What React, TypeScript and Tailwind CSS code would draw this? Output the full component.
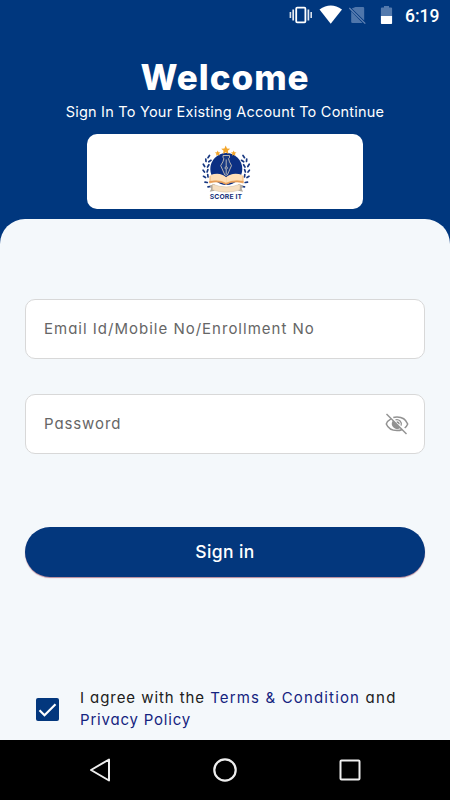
import React from "react";

function StatusBar() {
  return (
    <header className="flex h-8 items-start justify-end pr-[10px]">
      <svg width="117" height="30" viewBox="288 0 117 30" className="shrink-0">
        <g fill="none" stroke="#fff">
          <rect x="296.2" y="7.7" width="9.2" height="14.6" rx="1" strokeWidth="1.8" />
          <path d="M293.2 9.5v11M308.4 9.5v11" strokeWidth="1.7" opacity=".9" />
          <path d="M290.4 12v6M311.2 12v6" strokeWidth="1.6" opacity=".85" />
        </g>
        <path d="M319.5 9.4Q330.7 1.8 342 9.4L330.7 23.8Z" fill="#fff" />
        <g fill="#4f76ab">
          <path d="M355.5 7H363q1.2 0 1.2 1.2v12.2L351.8 8.6Z" />
          <path d="M351.2 11.2L362.5 23h-10q-1.3 0-1.3-1.3Z" />
        </g>
        <path d="M349.3 8L365.3 23.6" stroke="#6485b5" strokeWidth="1.3" />
        <path d="M384 6h5v1.5h2.1q1 0 1 1V16h-11.2V8.500q0-1 1-1H384Z" fill="#547aad" />
        <path d="M380.900 16h11.200v7.200q0 .8-.8.8h-9.600q-.8 0-.8-.8Z" fill="#fff" />
      </svg>
      <time className="mt-[5px] w-[35px] whitespace-nowrap font-[Roboto,sans-serif] text-[17.500px] leading-[22px] font-medium text-white">
        6:19
      </time>
    </header>
  );
}

function Logo() {
  return (
    <svg width="56" height="60" viewBox="197 141.5 56 60" role="img" aria-label="Score It">
      <circle cx="226.300" cy="168.500" r="16" fill="#0b2f83" />
      <g fill="#f3a62c">
        <path d="M225.700 145l1.300 2.900 3.200.3-2.400 2.100.7 3.100-2.800-1.600-2.800 1.600.7-3.100-2.400-2.100 3.200-.3Z" />
        <path d="M217.700 150l.8 1.800 2 .2-1.500 1.300.4 2-1.700-1-1.700 1 .4-2-1.500-1.300 2-.2Z" />
        <path d="M233.700 150l.8 1.800 2 .2-1.500 1.300.4 2-1.700-1-1.700 1 .4-2-1.500-1.300 2-.2Z" />
      </g>
      <g stroke="#183881" strokeWidth="1.700" strokeLinecap="round" fill="none">
        <path d="M208 157.200l1.500-2.200M206 161l-.2-2.500M208.800 161.300l2.200-1.500M204.700 166l-1.400-2.300M207.500 166.500l1.400-2.300M204.500 171.500l-1.400-1.800M207.100 171.500l.8-2.400M205.500 177l-2-1.200M208 176.500l-.3-2.500M207.300 182l-2.300-.4M210.300 186l-2.300.3" />
        <path d="M244.500 157.200l-1.500-2.200M246.500 161l.2-2.500M243.700 161.300l-2.200-1.500M247.800 166l1.400-2.300M245 166.500l-1.400-2.300M248 171.500l1.400-1.800M245.400 171.500l-.8-2.400M247 177l2-1.200M244.500 176.500l.3-2.500M245.200 182l2.300-.4M242.200 186l2.300.3" />
      </g>
      <path d="M223 155h6.500v2.300l-1 .8q.5 3 3 7l-4.200 9.500h-2.400l-4.200-9.500q2.700-4 3.200-7l-.9-.8Z" fill="#183a83" stroke="#c7c1b7" strokeWidth=".9" />
      <path d="M226.200 159v7.500M226.200 169v4.500" stroke="#d7d0c5" strokeWidth=".8" />
      <circle cx="226.200" cy="167.500" r="1.200" fill="none" stroke="#d7d0c5" strokeWidth=".8" />
      <path d="M209.500 175.500q10-4 16.500 1.300 6.700-5.300 17.500-1.300v7.500q-11-3-17.300 1.200-6.500-4.200-16.700-1.200Z" fill="#f0b575" />
      <path d="M210.500 174.500q9.500-3.500 15.500 2.300v5.500q-5.500-4-15.500-2Zm32 0q-9.800-3.500-16.300 2.300v5.500q6-4 16.300-2Z" fill="#ffe0b8" />
      <path d="M209 181.500q10-1.800 17 2 7-3.800 17.500-2" fill="none" stroke="#e59c57" strokeWidth="1.400" />
      <path d="M209.500 185l5-1.500v6.700l-4.800 1 1.500-3Zm33.800 0l-5-1.500v6.700l4.800 1-1.500-3Z" fill="#b2aaa0" />
      <path d="M212.500 183.700q13.800 5.500 27.500 0v5.600q-13.700 4.700-27.500 0Z" fill="#f6dfc1" stroke="#cbb99f" strokeWidth=".5" />
      <text x="209.800" y="198" textLength="32.200" fontFamily="Inter, sans-serif" fontSize="6.800" fontWeight="700" fill="#17327b">
        SCORE IT
      </text>
    </svg>
  );
}

function HiddenEye() {
  return (
    <svg width="26" height="26" viewBox="0 0 26 26" fill="none" stroke="#929292" strokeWidth="1.500">
      <path d="M7 7.800C4.500 9.100 3 11 2.300 13c1.500 3.700 5.500 6.600 10.700 6.600 2 0 3.700-.4 5.200-1.100M9.300 6.500c1-.3 2.400-.5 3.700-.5 5.200 0 9.200 3.100 10.700 7-.6 1.500-1.600 2.900-3 4" />
      <path d="M9.200 10.500a4.500 4.500 0 0 0 5.900 6.300Z" fill="#929292" />
      <path d="M11.500 8.800a4.500 4.500 0 0 1 5.600 5.800M12.700 11q2.300.1 2.500 2.300" strokeWidth="1.300" />
      <path d="M2.500 3l20 20" />
    </svg>
  );
}

function NavigationBar() {
  return (
    <nav className="flex h-[60px] items-center justify-between bg-black px-[88px]">
      <svg width="24" height="26" viewBox="0 0 24 26" fill="none" stroke="#eee" strokeWidth="2" strokeLinejoin="round">
        <path d="M21 2.500v21L3 13Z" />
      </svg>
      <svg width="26" height="26" viewBox="0 0 26 26" fill="none" stroke="#eee" strokeWidth="2.200">
        <circle cx="13" cy="13" r="10.700" />
      </svg>
      <svg width="24" height="24" viewBox="0 0 24 24" fill="none" stroke="#eee" strokeWidth="2">
        <rect x="2.500" y="2.500" width="19" height="19" rx="1" />
      </svg>
    </nav>
  );
}

export default function App() {
  return (
    <div className="flex h-[800px] w-[450px] flex-col overflow-hidden bg-[#00377e] font-[Inter,sans-serif] [font-feature-settings:'cv11']">
      <StatusBar />
      <section className="flex h-[187px] flex-col items-center pt-[25px] text-white">
        <h1 className="text-[35px] leading-10 font-extrabold tracking-[1px] whitespace-nowrap">Welcome</h1>
        <p className="mt-[5px] text-[14.5px] leading-5 tracking-[0.22px] whitespace-nowrap">
          Sign In To Your Existing Account To Continue
        </p>
        <div className="mt-3 flex h-[75px] w-[276px] items-center justify-center rounded-[10px] bg-white">
          <Logo />
        </div>
      </section>
      <main className="flex h-[521px] flex-col rounded-t-[25px] bg-[#f4f8fb] px-[25px] pt-20">
        <div className="flex h-[60px] shrink-0 items-center rounded-[10px] border border-[#d8d8d8] bg-white pl-[18px] text-[15px] tracking-[1px] whitespace-nowrap text-[#666]">
          <span>Email Id/Mobile No/Enrollment No</span>
        </div>
        <div className="mt-[35px] flex h-[60px] shrink-0 items-center justify-between rounded-[10px] border border-[#d8d8d8] bg-white pr-[14px] pl-[18px] text-[15px] tracking-[0.9px] text-[#666]">
          <span>Password</span>
          <HiddenEye />
        </div>
        <button className="mt-[73px] h-[50px] shrink-0 rounded-full bg-[#03377d] text-[17.5px] font-medium tracking-[0.4px] text-white shadow-[0_1px_1px_#b98898]">
          Sign in
        </button>
        <div className="mt-[110px] flex pl-[11px]">
          <span className="mt-[11px] flex size-[23px] shrink-0 items-center justify-center rounded-[2px] bg-[#03377d]">
            <svg width="19" height="16" viewBox="0 0 19 16" fill="none" stroke="#fff" strokeWidth="2.200">
              <path d="M1.500 8.300l5 5L17.500 2.300" />
            </svg>
          </span>
          <p className="ml-[21px] text-[15px] leading-[22px] tracking-[0.93px] whitespace-nowrap text-[#202020]">
            I agree with the <span className="tracking-[1.15px] text-[#14247f]">Terms &amp; Condition</span>
            <span className="tracking-[1.3px]"> and</span>
            <br />
            <span className="tracking-[0.8px] text-[#14247f]">Privacy Policy</span>
          </p>
        </div>
      </main>
      <NavigationBar />
    </div>
  );
}
